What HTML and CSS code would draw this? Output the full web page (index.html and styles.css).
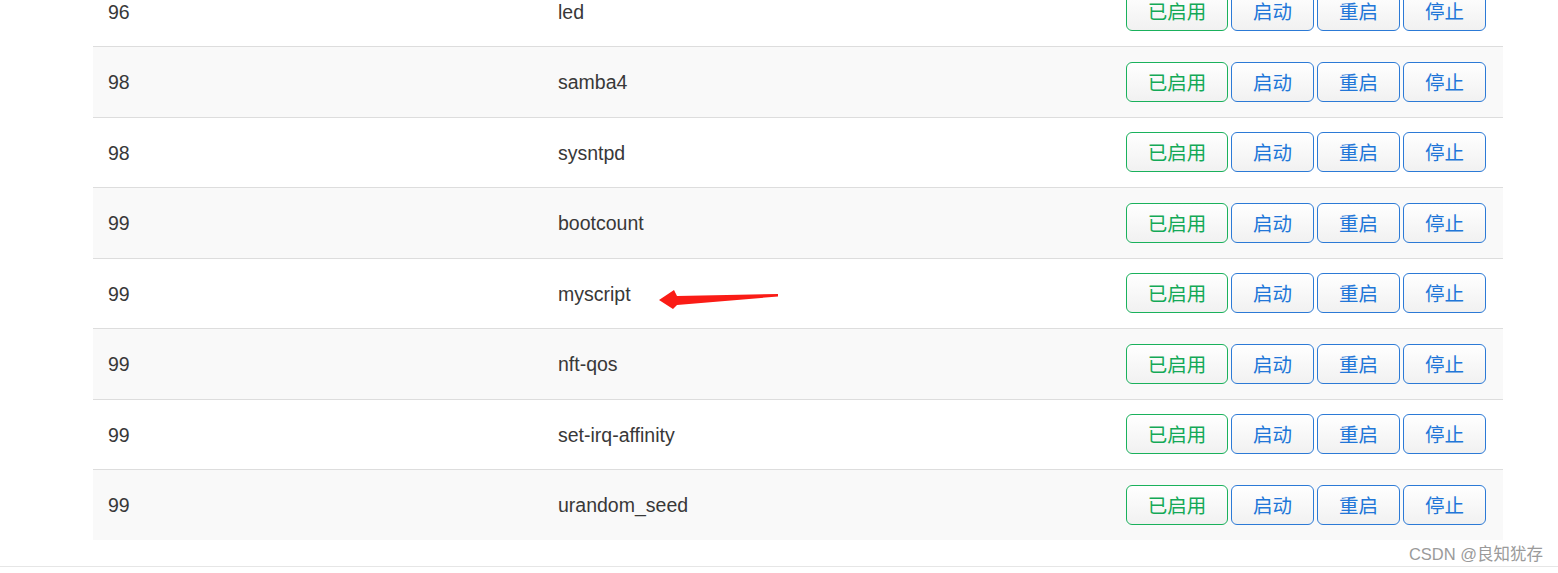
FILE: index.html
```html
<!DOCTYPE html>
<html lang="zh-CN">
<head>
    <meta charset="UTF-8" />
    <meta name="viewport" content="width=device-width, initial-scale=1.0" >
    <title>启动项</title>
    <link rel="stylesheet" href="styles.css">
</head>
<body>
    <div id="startup-table">
        <div class="row">
            <div class="cell prio">96</div>
            <div class="cell name">led</div>
            <div class="cell actions">
                <button class="btn btn-green">已启用</button>
                <button class="btn btn-blue">启动</button>
                <button class="btn btn-blue">重启</button>
                <button class="btn btn-blue">停止</button>
            </div>
        </div>
        <div class="row">
            <div class="cell prio">98</div>
            <div class="cell name">samba4</div>
            <div class="cell actions">
                <button class="btn btn-green">已启用</button>
                <button class="btn btn-blue">启动</button>
                <button class="btn btn-blue">重启</button>
                <button class="btn btn-blue">停止</button>
            </div>
        </div>
        <div class="row">
            <div class="cell prio">98</div>
            <div class="cell name">sysntpd</div>
            <div class="cell actions">
                <button class="btn btn-green">已启用</button>
                <button class="btn btn-blue">启动</button>
                <button class="btn btn-blue">重启</button>
                <button class="btn btn-blue">停止</button>
            </div>
        </div>
        <div class="row">
            <div class="cell prio">99</div>
            <div class="cell name">bootcount</div>
            <div class="cell actions">
                <button class="btn btn-green">已启用</button>
                <button class="btn btn-blue">启动</button>
                <button class="btn btn-blue">重启</button>
                <button class="btn btn-blue">停止</button>
            </div>
        </div>
        <div class="row">
            <div class="cell prio">99</div>
            <div class="cell name">myscript</div>
            <div class="cell actions">
                <button class="btn btn-green">已启用</button>
                <button class="btn btn-blue">启动</button>
                <button class="btn btn-blue">重启</button>
                <button class="btn btn-blue">停止</button>
            </div>
            <!-- red arrow drawn on the screenshot -->
            <svg class="arrow" viewBox="0 0 122 22" width="122" height="22">
                <polygon points="2,12 17,2 20,8 121,6 121,8.5 20,17 16,21" fill="#fa1c16"/>
            </svg>
        </div>
        <div class="row">
            <div class="cell prio">99</div>
            <div class="cell name">nft-qos</div>
            <div class="cell actions">
                <button class="btn btn-green">已启用</button>
                <button class="btn btn-blue">启动</button>
                <button class="btn btn-blue">重启</button>
                <button class="btn btn-blue">停止</button>
            </div>
        </div>
        <div class="row">
            <div class="cell prio">99</div>
            <div class="cell name">set-irq-affinity</div>
            <div class="cell actions">
                <button class="btn btn-green">已启用</button>
                <button class="btn btn-blue">启动</button>
                <button class="btn btn-blue">重启</button>
                <button class="btn btn-blue">停止</button>
            </div>
        </div>
        <div class="row">
            <div class="cell prio">99</div>
            <div class="cell name">urandom_seed</div>
            <div class="cell actions">
                <button class="btn btn-green">已启用</button>
                <button class="btn btn-blue">启动</button>
                <button class="btn btn-blue">重启</button>
                <button class="btn btn-blue">停止</button>
            </div>
        </div>
    </div>
    <div id="footer">
        <span class="watermark">CSDN @良知犹存</span>
    </div>
</body>
</html>
```

FILE: styles.css
```css
body{
    margin: 0;
    background: #fff;
    font-family: "Liberation Sans", Arial, "Noto Sans CJK SC", sans-serif;
    color: #383838;
    overflow: hidden;
}
#startup-table{
    width: 1410px;
    margin: -24.5px 0 0 93px;
}
.row{
    position: relative;
    display: grid;
    grid-template-columns: 450px 1fr auto;
    align-items: center;
    height: 70.5px;
    box-sizing: border-box;
    border-top: 1px solid #dddddd;
    background: #fff;
}
.row:nth-child(even){
    background: #f9f9f9;
}
.cell{
    font-size: 19.5px;
    padding: 2px 15px 0;
}
.actions{
    display: flex;
    gap: 3px;
    padding: 0 17px 0 15px;
}
.btn{
    height: 40px;
    padding: 0 20px;
    border-radius: 6px;
    font-family: "Noto Sans CJK SC", sans-serif;
    font-size: 19.5px;
    line-height: 38px;
    background: linear-gradient(to bottom, #ffffff, #f1f1f1);
    cursor: pointer;
}
.btn-green{
    border: 1px solid #1ab15c;
    color: #13a957;
    width: 102px;
}
.btn-blue{
    border: 1px solid #2c7ad6;
    color: #2176d8;
    width: 83px;
}
.arrow{
    position: absolute;
    left: 564px;
    top: 29px;
}
#footer{
    height: 26.5px;
    border-bottom: 1px solid #e6e6e6;
    display: flex;
    justify-content: flex-end;
    align-items: center;
    padding-right: 15px;
}
.watermark{
    font-family: "Liberation Sans", "Noto Sans CJK SC", sans-serif;
    font-size: 16.5px;
    color: #9a9a9a;
}
```
